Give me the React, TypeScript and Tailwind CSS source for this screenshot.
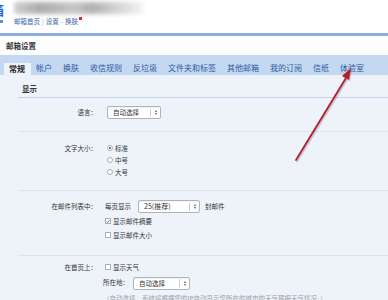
import React from "react";

const F = { fontFamily: '"Noto Sans CJK SC", "Liberation Sans", sans-serif' };

function Select({ w, text, big }: { w: string; text: string; big?: boolean }) {
  return (
    <div
      className={`${w} h-[13px] bg-white border border-[#a9b3c2] rounded-[2px] flex items-center shadow-[inset_0_1px_1px_rgba(0,0,0,0.06)]`}
    >
      <span className={`flex-1 pl-[5px] ${big ? "text-[7px]" : "text-[6.5px]"} leading-[11px] text-[#333]`}>{text}</span>
      <span className="w-px h-[8px] bg-[#c8ced8]" />
      <span className="w-[9px] flex flex-col items-center justify-center gap-[1px]">
        <span className="w-0 h-0 border-l-[1.5px] border-r-[1.5px] border-b-[2px] border-l-transparent border-r-transparent border-b-[#555]" />
        <span className="w-0 h-0 border-l-[1.5px] border-r-[1.5px] border-t-[2px] border-l-transparent border-r-transparent border-t-[#555]" />
      </span>
    </div>
  );
}

function Radio({ checked, label }: { checked?: boolean; label: string }) {
  return (
    <div className="flex items-center h-[12px] pl-[2px]">
      <span className="w-[6px] h-[6px] rounded-full border border-[#a8b0bc] bg-white flex items-center justify-center">
        {checked && <span className="w-[2.5px] h-[2.5px] rounded-full bg-[#3a4a60]" />}
      </span>
      <span className="ml-[2px] text-[6.5px] leading-[12px] text-[#333]">{label}</span>
    </div>
  );
}

function Check({ checked, label }: { checked?: boolean; label: string }) {
  return (
    <div className="flex items-center h-[12px]">
      <span className="w-[6px] h-[6px] border border-[#a8b0bc] bg-white flex items-center justify-center">
        {checked && (
          <svg width="5" height="5" viewBox="0 0 5 5">
            <path d="M0.6 2.6 L2 4 L4.5 0.8" stroke="#3a4a60" strokeWidth="0.9" fill="none" />
          </svg>
        )}
      </span>
      <span className="ml-[2px] text-[6.5px] leading-[12px] text-[#333]">{label}</span>
    </div>
  );
}

function Label({ children }: { children: React.ReactNode }) {
  return <div className="w-[79px] text-right text-[6.5px] leading-[12px] text-[#333] shrink-0">{children}</div>;
}

export default function App() {
  const tabs = ["常规", "帐户", "换肤", "收信规则", "反垃圾", "文件夹和标签", "其他邮箱", "我的订阅", "信纸", "体验室"];
  return (
    <div className="relative w-[388px] h-[300px] overflow-hidden bg-[#eef3fa]" style={F}>
      {/* header */}
      <div className="h-[33px] bg-white flex overflow-hidden">
        <div className="w-[10px] overflow-hidden flex flex-col">
          <span className="block ml-[-9px] mt-[2px] text-[13px] leading-[16px] font-bold text-[#2a6cc4]">箱</span>
          <span className="block mt-[2px] w-[3px] h-[3px] bg-[#5b8fd6]" />
        </div>
        <div className="ml-[4px] flex flex-col">
          <div className="mt-[2px] w-[130px] h-[12px] rounded-[3px] bg-[linear-gradient(90deg,#d0d0d0,#acacac_20%,#c6c6c6_45%,#b2b2b2_60%,#dcdcdc_85%,#f4f4f4)] blur-[2px]" />
          <div className="mt-[2px] flex items-center text-[6.5px] leading-[10px] text-[#3b64a6]">
            <span>邮箱首页</span>
            <span className="mx-[2px] text-[#999]">|</span>
            <span>设置</span>
            <span className="mx-[2px] text-[#888]">-</span>
            <span>换肤</span>
            <span className="ml-[1px] mb-[5px] w-[2.5px] h-[2.5px] bg-[#e0262b]" />
          </div>
        </div>
      </div>
      <div className="h-[3px] bg-[#8aaee2]" />
      {/* title band */}
      <div className="h-[19px] bg-[#fdfdff] flex items-center pl-[6px]">
        <span className="text-[7.5px] leading-[10px] font-bold text-[#333]">邮箱设置</span>
      </div>
      {/* tabs */}
      <div className="h-[20px] bg-[#c5d8f1] flex items-end pl-[3.5px]">
        {tabs.map((t, i) => (
          <div
            key={t}
            className={`h-[12px] px-[5.5px] flex items-center text-[8px] leading-[12px] ${
              i === 0 ? "bg-[#eef3fa] text-[#222] font-bold" : "text-[#2d5aa0] mb-[1px]"
            }`}
          >
            {t}
          </div>
        ))}
      </div>
      {/* content */}
      <div className="pl-[18px]">
        <div className="h-[23px] flex items-end pb-[4px] pl-[4px] border-b border-[#c3d4ec]">
          <span className="text-[7.5px] leading-[8px] font-bold text-[#333]">显示</span>
        </div>
        {/* language */}
        <div className="h-[34px] pt-[8px] flex border-b border-[#dbe3ee] gap-[10px]">
          <Label>
            <span className="leading-[13px] block">语言：</span>
          </Label>
          <Select w="w-[54px]" text="自动选择" />
        </div>
        {/* font size */}
        <div className="h-[59px] pt-[10px] flex border-b border-[#dbe3ee] gap-[8px]">
          <Label>文字大小：</Label>
          <div className="flex flex-col">
            <Radio checked label="标准" />
            <Radio label="中号" />
            <Radio label="大号" />
          </div>
        </div>
        {/* list */}
        <div className="h-[65px] pt-[9px] flex border-b border-[#dbe3ee] gap-[8px]">
          <Label>
            <span className="leading-[13px] block">在邮件列表中：</span>
          </Label>
          <div className="flex flex-col gap-[2px]">
            <div className="flex items-center h-[13px]">
              <span className="text-[6.5px] text-[#333] w-[33px]">每页显示</span>
              <Select w="w-[62px]" text="25(推荐)" big />
              <span className="ml-[5px] text-[6.5px] text-[#333]">封邮件</span>
            </div>
            <Check checked label="显示邮件摘要" />
            <Check label="显示邮件大小" />
          </div>
        </div>
        {/* homepage */}
        <div className="pt-[5px] flex gap-[8px]">
          <Label>在首页上：</Label>
          <div className="flex flex-col">
            <Check label="显示天气" />
            <div className="mt-[3px] flex items-center h-[14px] -ml-[2px]">
              <span className="text-[6.5px] text-[#333] w-[30px]">所在地：</span>
              <Select w="w-[57px]" text="自动选择" />
            </div>
            <div className="mt-[2px] -ml-[2px] whitespace-nowrap text-[6.5px] leading-[12px] text-[#9aa0a8]">
              （自动选择，系统将根据您的IP自动显示您所在的城市的天气预报天气情况。）
            </div>
          </div>
        </div>
      </div>
      {/* red arrow */}
      <svg className="absolute left-0 top-0 pointer-events-none" width="388" height="300">
        <g transform="translate(1.2,1.2)" opacity="0.35">
          <line x1="296" y1="160" x2="346" y2="78" stroke="#777" strokeWidth="2" strokeLinecap="round" />
          <polygon points="351,68 342,76 349,80" fill="#777" />
        </g>
        <line x1="296" y1="160" x2="346" y2="78" stroke="#b51d2c" strokeWidth="1.8" strokeLinecap="round" />
        <polygon points="351,68 342,76 349,80" fill="#b51d2c" />
      </svg>
    </div>
  );
}
